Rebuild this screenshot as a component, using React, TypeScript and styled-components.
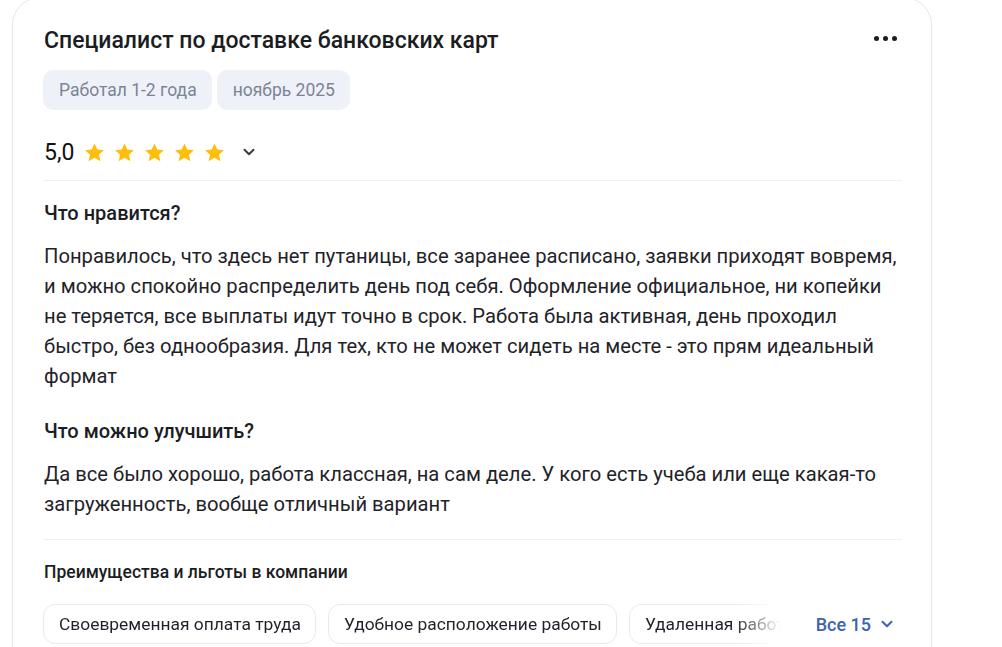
import React from "react";
import styled, { createGlobalStyle } from "styled-components";

const GlobalStyle = createGlobalStyle`
  html, body {
    margin: 0;
    padding: 0;
    background: #ffffff;
    font-family: Roboto, "Noto Sans", "Liberation Sans", sans-serif;
    color: #1f2329;
    overflow: hidden;
  }
`;

const Page = styled.div`
  padding-left: 12px;
`;

const Card = styled.article`
  width: 920px;
  box-sizing: border-box;
  margin-top: -3px;
  padding: 29px 29px 0 30px;
  border: 1px solid #e2e6ee;
  border-radius: 28px;
  background: #fff;
  height: 700px;
`;

const TitleRow = styled.div`
  display: flex;
  align-items: center;
  justify-content: space-between;
  padding-left: 1px;
`;

const Title = styled.h2`
  margin: 0;
  font-size: 23px;
  line-height: 28px;
  font-weight: 500;
  color: #1b1d22;
`;

const MoreButton = styled.button`
  border: 0;
  background: none;
  padding: 0;
  margin: 0 5px 6px 0;
  display: flex;
  gap: 4px;
  cursor: pointer;
`;

const Dot = styled.span`
  width: 5px;
  height: 5px;
  border-radius: 50%;
  background: #1b1d22;
`;

const Tags = styled.div`
  display: flex;
  gap: 5px;
  margin-top: 15px;
`;

const Tag = styled.span`
  height: 40px;
  display: inline-flex;
  align-items: center;
  padding: 0 15px 0 16px;
  border-radius: 10px;
  background: #eef1f7;
  color: #7b8496;
  font-size: 17.5px;
`;

const Body = styled.div`
  padding-left: 1px;
`;

const RatingRow = styled.div`
  display: flex;
  align-items: center;
  height: 32px;
  margin-top: 26px;
`;

const Score = styled.span`
  font-size: 23px;
  color: #111;
  margin-right: 10px;
`;

const Stars = styled.div`
  display: flex;
  gap: 9px;
`;

const Chevron = styled.svg<{ $color?: string }>`
  display: block;
  color: ${({ $color }) => $color || "#3a3d44"};
`;

const RatingToggle = styled.button`
  border: 0;
  background: none;
  padding: 0;
  margin-left: 17px;
  display: flex;
  cursor: pointer;
`;

const Divider = styled.hr<{ $top: number }>`
  border: 0;
  height: 1px;
  background: #eef0f5;
  margin: ${({ $top }) => $top}px 0 0;
`;

const SectionTitle = styled.h3<{ $top: number }>`
  margin: ${({ $top }) => $top}px 0 0;
  font-size: 20px;
  line-height: 26px;
  font-weight: 500;
  color: #1b1d22;
`;

const Text = styled.p`
  margin: 15px 0 0;
  font-size: 20.2px;
  line-height: 30px;
  color: #1f2329;
`;

const BenefitsTitle = styled.h4`
  margin: 20px 0 0;
  font-size: 17.5px;
  line-height: 24px;
  font-weight: 500;
  color: #1b1d22;
`;

const BenefitsRow = styled.div`
  display: flex;
  align-items: center;
  margin-top: 20px;
`;

const BenefitsList = styled.div`
  flex: 1;
  display: flex;
  gap: 12px;
  overflow: hidden;
  -webkit-mask-image: linear-gradient(to right, #000 0, #000 692px, transparent 738px);
  mask-image: linear-gradient(to right, #000 0, #000 692px, transparent 738px);
`;

const Benefit = styled.span`
  flex: none;
  height: 38px;
  display: inline-flex;
  align-items: center;
  padding: 0 14px 0 15px;
  border: 1px solid #e7eaf1;
  border-radius: 12px;
  font-size: 17.4px;
  color: #1f2329;
  white-space: nowrap;
`;

const AllLink = styled.button`
  flex: none;
  border: 0;
  background: none;
  padding: 0;
  margin-left: 14px;
  margin-right: 8px;
  display: flex;
  align-items: center;
  gap: 9px;
  font: inherit;
  font-size: 18px;
  font-weight: 500;
  color: #3a66ae;
  cursor: pointer;
`;

const Star = () => (
  <svg width="21" height="21" viewBox="0 0 24 23">
    <path
      d="M12 1.2l3.2 6.9 7.5.8-5.6 5.1 1.6 7.4L12 17.6l-6.7 3.8 1.6-7.4L1.3 8.9l7.5-.8z"
      fill="#ffbe0b"
    />
  </svg>
);

const ChevronIcon = ({ color }: { color?: string }) => (
  <Chevron $color={color} width="14" height="14" viewBox="0 0 14 14">
    <path d="M2.5 4.8L7 9.2l4.5-4.4" fill="none" stroke="currentColor" strokeWidth="2" strokeLinecap="round" strokeLinejoin="round" />
  </Chevron>
);

const benefits = ["Своевременная оплата труда", "Удобное расположение работы", "Удаленная работа"];

const App: React.FC = () => (
  <Page>
    <GlobalStyle />
    <Card>
      <TitleRow>
        <Title>Специалист по доставке банковских карт</Title>
        <MoreButton aria-label="Ещё">
          <Dot />
          <Dot />
          <Dot />
        </MoreButton>
      </TitleRow>
      <Tags>
        <Tag>Работал 1-2 года</Tag>
        <Tag>ноябрь 2025</Tag>
      </Tags>
      <Body>
        <RatingRow>
          <Score>5,0</Score>
          <Stars>
            {[0, 1, 2, 3, 4].map((i) => (
              <Star key={i} />
            ))}
          </Stars>
          <RatingToggle aria-label="Подробнее">
            <ChevronIcon />
          </RatingToggle>
        </RatingRow>
      </Body>
      <Divider $top={12} />
      <Body>
        <SectionTitle $top={19}>Что нравится?</SectionTitle>
        <Text>
          Понравилось, что здесь нет путаницы, все заранее расписано, заявки приходят вовремя, и можно спокойно
          распределить день под себя. Оформление официальное, ни копейки не теряется, все выплаты идут точно в срок.
          Работа была активная, день проходил быстро, без однообразия. Для тех, кто не может сидеть на месте - это
          прям идеальный формат
        </Text>
        <SectionTitle $top={27}>Что можно улучшить?</SectionTitle>
        <Text>
          Да все было хорошо, работа классная, на сам деле. У кого есть учеба или еще какая-то загруженность, вообще
          отличный вариант
        </Text>
      </Body>
      <Divider $top={20} />
      <Body>
        <BenefitsTitle>Преимущества и льготы в компании</BenefitsTitle>
      </Body>
      <BenefitsRow>
        <BenefitsList>
          {benefits.map((b) => (
            <Benefit key={b}>{b}</Benefit>
          ))}
        </BenefitsList>
        <AllLink>
          Все 15
          <ChevronIcon color="#3a66ae" />
        </AllLink>
      </BenefitsRow>
    </Card>
  </Page>
);

export default App;
